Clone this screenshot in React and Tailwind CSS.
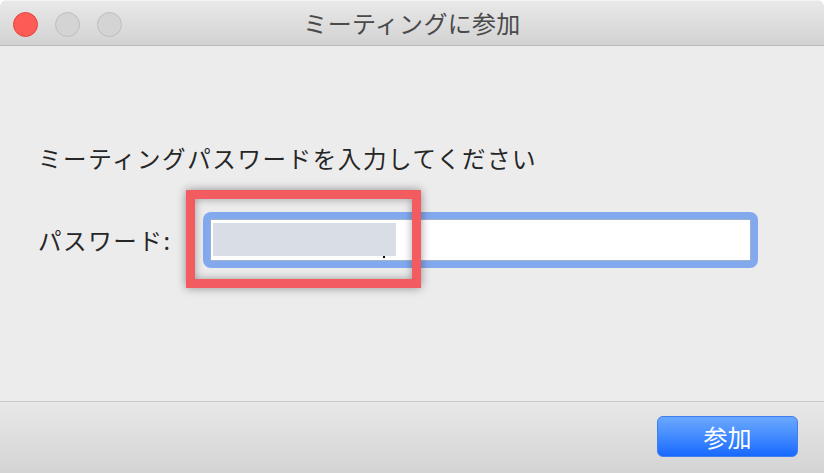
const font = { fontFamily: '"Noto Sans CJK JP", "Noto Sans", sans-serif' };

const Light = ({ color, border }) => (
  <span className={`block w-[25px] h-[25px] rounded-full border ${color} ${border}`} />
);

const JoinDialog = () => {
  return (
    <div className="w-[824px] h-[473px] bg-white" style={font}>
      <div className="w-full h-full flex flex-col rounded-t-[7px] overflow-hidden bg-[#ececec]">
        {/* title bar */}
        <div className="relative h-[46px] shrink-0 flex items-center border-t border-t-[#f4f4f4] border-b border-b-[#b9b9b9] bg-gradient-to-b from-[#e9e9e9] to-[#d2d2d2]">
          <div className="absolute left-[13px] top-[11px] flex gap-[17px]">
            <Light color="bg-[#fd5b55]" border="border-[#e2463f]" />
            <Light color="bg-[#d4d4d4]" border="border-[#bebebe]" />
            <Light color="bg-[#d4d4d4]" border="border-[#bebebe]" />
          </div>
          <div className="w-full text-center text-[24px] leading-[30px] text-[#4a4a4a] tracking-[0.3px]">
            ミーティングに参加
          </div>
        </div>

        {/* body */}
        <div className="flex-1 pl-[38px] pt-[96px]">
          <p className="text-[23.5px] leading-[32px] text-[#262626] tracking-[1.6px]">
            ミーティングパスワードを入力してください
          </p>
          <div className="mt-[38px] flex items-center">
            <span className="w-[165px] text-[23.5px] leading-[32px] text-[#262626] tracking-[1.6px]">
              パスワード:
            </span>
            <div className="relative w-[555px] h-[56px] rounded-[8px] bg-[#82a8ee] p-[7px]">
              <div className="w-full h-full bg-white border border-[#9fb0cf] pl-[2px] pt-[3px]">
                <div className="relative w-[183px] h-[33px] bg-[#d9dde5]">
                  <span className="absolute left-[170px] bottom-[-2px] w-[2px] h-[2px] bg-black" />
                </div>
              </div>
              <div className="absolute left-[-17px] top-[-22px] w-[235px] h-[98px] border-[9px] border-[#f25b5f] shadow-[0_0_9px_rgba(0,0,0,0.4),inset_0_0_9px_rgba(0,0,0,0.35)]" />
            </div>
          </div>
        </div>

        {/* footer */}
        <div className="h-[72px] shrink-0 border-t border-t-[#c9c9c9] bg-gradient-to-b from-[#e8e8e8] to-[#d4d4d4] flex justify-end items-start pt-[14px] pr-[26px]">
          <button className="w-[141px] h-[41px] rounded-[6px] border border-[#3f7ef0] bg-gradient-to-b from-[#6aa8ff] to-[#1668ff] text-white text-[24px] leading-[30px]">
            参加
          </button>
        </div>
      </div>
    </div>
  );
};

export default function App() {
  return <JoinDialog />;
}
